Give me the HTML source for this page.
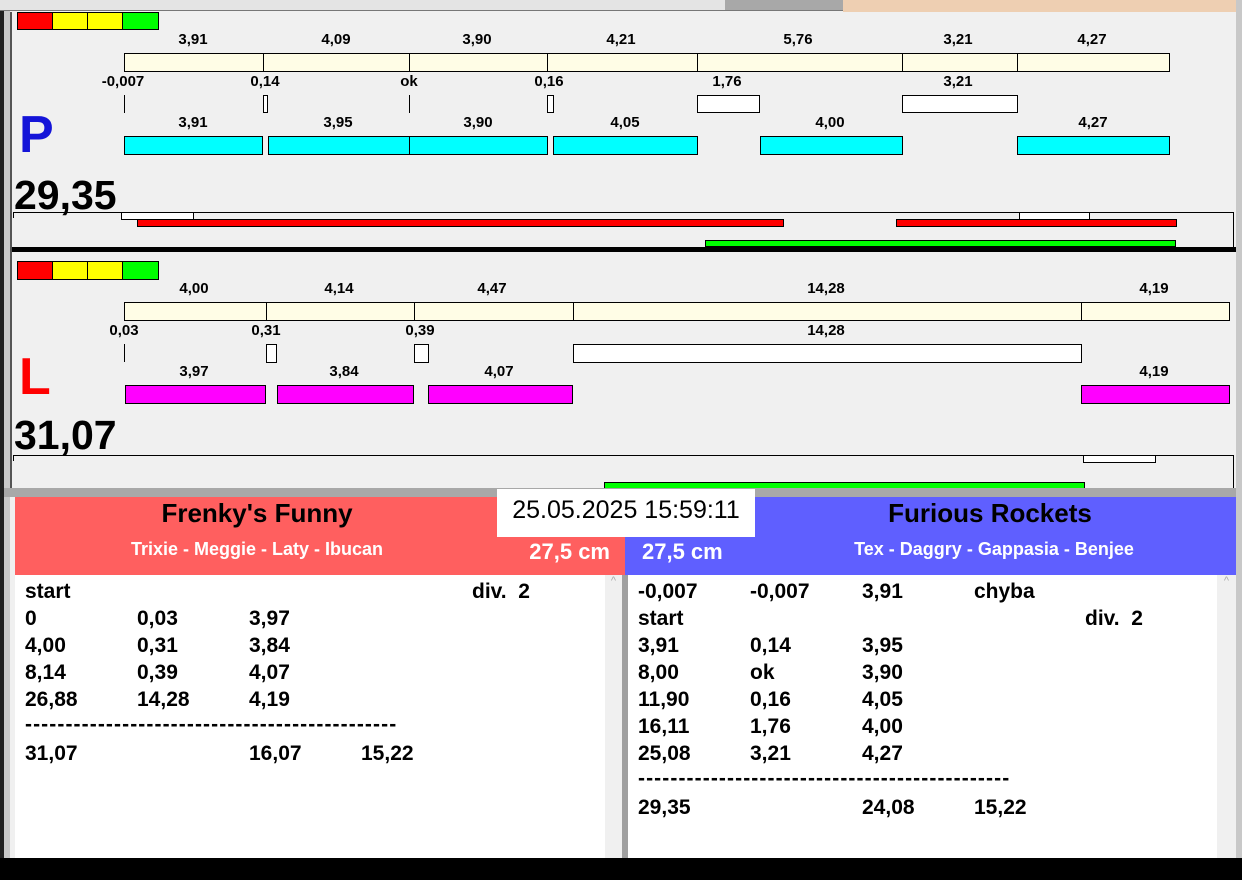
<!DOCTYPE html>
<html><head><meta charset="utf-8"><style>
*{margin:0;padding:0;box-sizing:border-box}
body{width:1242px;height:880px;position:relative;overflow:hidden;background:#f0f0f0;font-family:"Liberation Sans",Arial,sans-serif}
div{position:absolute}
.c{width:100px;text-align:center;font-weight:bold;font-size:15px;line-height:16px;color:#000}
.b{border:1px solid #000}
.y{background:#fffde6}
.w{background:#fff}
.cy{background:#00ffff}
.mg{background:#ff00ff}
.vl{width:1px;background:#000}
.t{font-weight:bold;font-size:21px;line-height:27px;color:#000;white-space:nowrap}
.d{letter-spacing:1.1px}
</style></head><body>
<!-- frame -->
<div style="left:0;top:0;width:4px;height:880px;background:#202020"></div>
<div style="left:4px;top:0;width:6px;height:880px;background:#c8c8c8"></div>
<div style="left:0;top:0;width:843px;height:11px;background:#e4e4e4;border-bottom:1px solid #777"></div>
<div style="left:725px;top:0;width:118px;height:10px;background:#a8a8a8"></div>
<div style="left:843px;top:0;width:393px;height:12px;background:#eecfb2"></div>
<div style="left:10px;top:12px;width:2px;height:476px;background:#555"></div>
<div style="left:1236px;top:0;width:6px;height:860px;background:#c8c8c8"></div>

<!-- panel 1 -->
<div style="left:17px;top:12px;width:36px;height:18px;background:#f00" class="b"></div>
<div style="left:52px;top:12px;width:36px;height:18px;background:#ff0" class="b"></div>
<div style="left:87px;top:12px;width:36px;height:18px;background:#ff0" class="b"></div>
<div style="left:122px;top:12px;width:37px;height:18px;background:#0f0" class="b"></div>

<div class="c" style="left:143px;top:32px">3,91</div>
<div class="c" style="left:286px;top:32px">4,09</div>
<div class="c" style="left:427px;top:32px">3,90</div>
<div class="c" style="left:571px;top:32px">4,21</div>
<div class="c" style="left:748px;top:32px">5,76</div>
<div class="c" style="left:908px;top:32px">3,21</div>
<div class="c" style="left:1042px;top:32px">4,27</div>

<div class="b y" style="left:124px;top:53px;width:140px;height:19px"></div>
<div class="b y" style="left:263px;top:53px;width:147px;height:19px"></div>
<div class="b y" style="left:409px;top:53px;width:139px;height:19px"></div>
<div class="b y" style="left:547px;top:53px;width:151px;height:19px"></div>
<div class="b y" style="left:697px;top:53px;width:206px;height:19px"></div>
<div class="b y" style="left:902px;top:53px;width:116px;height:19px"></div>
<div class="b y" style="left:1017px;top:53px;width:153px;height:19px"></div>

<div class="c" style="left:73px;top:74px">-0,007</div>
<div class="c" style="left:215px;top:74px">0,14</div>
<div class="c" style="left:359px;top:74px">ok</div>
<div class="c" style="left:499px;top:74px">0,16</div>
<div class="c" style="left:677px;top:74px">1,76</div>
<div class="c" style="left:908px;top:74px">3,21</div>

<div class="vl" style="left:124px;top:95px;height:18px"></div>
<div class="b w" style="left:263px;top:95px;width:5px;height:18px"></div>
<div class="vl" style="left:409px;top:95px;height:18px"></div>
<div class="b w" style="left:547px;top:95px;width:7px;height:18px"></div>
<div class="b w" style="left:697px;top:95px;width:63px;height:18px"></div>
<div class="b w" style="left:902px;top:95px;width:116px;height:18px"></div>

<div class="c" style="left:143px;top:115px">3,91</div>
<div class="c" style="left:288px;top:115px">3,95</div>
<div class="c" style="left:428px;top:115px">3,90</div>
<div class="c" style="left:575px;top:115px">4,05</div>
<div class="c" style="left:780px;top:115px">4,00</div>
<div class="c" style="left:1043px;top:115px">4,27</div>

<div class="b cy" style="left:124px;top:136px;width:139px;height:19px"></div>
<div class="b cy" style="left:268px;top:136px;width:142px;height:19px"></div>
<div class="b cy" style="left:409px;top:136px;width:139px;height:19px"></div>
<div class="b cy" style="left:553px;top:136px;width:145px;height:19px"></div>
<div class="b cy" style="left:760px;top:136px;width:143px;height:19px"></div>
<div class="b cy" style="left:1017px;top:136px;width:153px;height:19px"></div>

<div style="left:19px;top:105px;font-weight:bold;font-size:52px;line-height:60px;color:#1414d8">P</div>
<div style="left:14px;top:172px;font-weight:bold;font-size:41px;line-height:46px;color:#000">29,35</div>

<div style="left:13px;top:212px;width:1221px;height:1px;background:#000"></div>
<div style="left:1233px;top:212px;width:1px;height:35px;background:#000"></div>
<div style="left:13px;top:212px;width:1px;height:6px;background:#000"></div>
<div class="b w" style="left:121px;top:212px;width:73px;height:8px"></div>
<div class="b w" style="left:1019px;top:212px;width:71px;height:8px"></div>
<div class="b" style="left:137px;top:219px;width:647px;height:8px;background:#f00"></div>
<div class="b" style="left:896px;top:219px;width:281px;height:8px;background:#f00"></div>
<div class="b" style="left:705px;top:240px;width:471px;height:7px;background:#0f0"></div>

<div style="left:12px;top:247px;width:1224px;height:5px;background:#000"></div>

<!-- panel 2 -->
<div style="left:17px;top:261px;width:36px;height:19px;background:#f00" class="b"></div>
<div style="left:52px;top:261px;width:36px;height:19px;background:#ff0" class="b"></div>
<div style="left:87px;top:261px;width:36px;height:19px;background:#ff0" class="b"></div>
<div style="left:122px;top:261px;width:37px;height:19px;background:#0f0" class="b"></div>

<div class="c" style="left:144px;top:281px">4,00</div>
<div class="c" style="left:289px;top:281px">4,14</div>
<div class="c" style="left:442px;top:281px">4,47</div>
<div class="c" style="left:776px;top:281px">14,28</div>
<div class="c" style="left:1104px;top:281px">4,19</div>

<div class="b y" style="left:124px;top:302px;width:143px;height:19px"></div>
<div class="b y" style="left:266px;top:302px;width:149px;height:19px"></div>
<div class="b y" style="left:414px;top:302px;width:160px;height:19px"></div>
<div class="b y" style="left:573px;top:302px;width:509px;height:19px"></div>
<div class="b y" style="left:1081px;top:302px;width:149px;height:19px"></div>

<div class="c" style="left:74px;top:323px">0,03</div>
<div class="c" style="left:216px;top:323px">0,31</div>
<div class="c" style="left:370px;top:323px">0,39</div>
<div class="c" style="left:776px;top:323px">14,28</div>

<div class="vl" style="left:124px;top:344px;height:18px"></div>
<div class="b w" style="left:266px;top:344px;width:11px;height:19px"></div>
<div class="b w" style="left:414px;top:344px;width:15px;height:19px"></div>
<div class="b w" style="left:573px;top:344px;width:509px;height:19px"></div>

<div class="c" style="left:144px;top:364px">3,97</div>
<div class="c" style="left:294px;top:364px">3,84</div>
<div class="c" style="left:449px;top:364px">4,07</div>
<div class="c" style="left:1104px;top:364px">4,19</div>

<div class="b mg" style="left:125px;top:385px;width:141px;height:19px"></div>
<div class="b mg" style="left:277px;top:385px;width:137px;height:19px"></div>
<div class="b mg" style="left:428px;top:385px;width:145px;height:19px"></div>
<div class="b mg" style="left:1081px;top:385px;width:149px;height:19px"></div>

<div style="left:19px;top:349px;font-weight:bold;font-size:52px;line-height:56px;color:#f00">L</div>
<div style="left:14px;top:412px;font-weight:bold;font-size:41px;line-height:46px;color:#000">31,07</div>

<div style="left:13px;top:455px;width:1221px;height:1px;background:#000"></div>
<div style="left:1233px;top:455px;width:1px;height:33px;background:#000"></div>
<div style="left:13px;top:455px;width:1px;height:6px;background:#000"></div>
<div class="b w" style="left:1083px;top:455px;width:73px;height:8px"></div>
<div class="b" style="left:604px;top:482px;width:481px;height:7px;background:#0f0"></div>

<div style="left:4px;top:488px;width:1232px;height:9px;background:#a8a8a8"></div>

<!-- headers -->
<div style="left:15px;top:497px;width:610px;height:78px;background:#ff5f5f"></div>
<div style="left:625px;top:497px;width:611px;height:78px;background:#5f5fff"></div>
<div style="left:497px;top:489px;width:258px;height:48px;background:#fff"></div>
<div style="left:497px;top:495px;width:258px;text-align:center;font-size:25px;line-height:30px;color:#000">25.05.2025 15:59:11</div>
<div style="left:57px;top:497px;width:400px;text-align:center;font-weight:bold;font-size:26px;line-height:32px;color:#000">Frenky's Funny</div>
<div style="left:57px;top:537px;width:400px;text-align:center;font-weight:bold;font-size:18px;line-height:24px;color:#fff">Trixie - Meggie - Laty - Ibucan</div>
<div style="left:450px;top:538px;width:160px;text-align:right;font-weight:bold;font-size:22px;line-height:28px;color:#fff">27,5 cm</div>
<div style="left:790px;top:497px;width:400px;text-align:center;font-weight:bold;font-size:26px;line-height:32px;color:#000">Furious Rockets</div>
<div style="left:794px;top:537px;width:400px;text-align:center;font-weight:bold;font-size:18px;line-height:24px;color:#fff">Tex - Daggry - Gappasia - Benjee</div>
<div style="left:642px;top:538px;font-weight:bold;font-size:22px;line-height:28px;color:#fff">27,5 cm</div>

<!-- lists -->
<div style="left:15px;top:575px;width:590px;height:285px;background:#fff"></div>
<div style="left:605px;top:575px;width:17px;height:285px;background:#f0f0f0;color:#aaa;font-size:11px;text-align:center">^</div>
<div style="left:622px;top:575px;width:6px;height:285px;background:#a0a0a0"></div>
<div style="left:628px;top:575px;width:589px;height:285px;background:#fff"></div>
<div style="left:1217px;top:575px;width:19px;height:285px;background:#f0f0f0;color:#aaa;font-size:11px;text-align:center">^</div>

<div class="t" style="left:25px;top:578px">start</div><div class="t" style="left:472px;top:578px">div.&nbsp; 2</div>
<div class="t" style="left:25px;top:605px">0</div><div class="t" style="left:137px;top:605px">0,03</div><div class="t" style="left:249px;top:605px">3,97</div>
<div class="t" style="left:25px;top:632px">4,00</div><div class="t" style="left:137px;top:632px">0,31</div><div class="t" style="left:249px;top:632px">3,84</div>
<div class="t" style="left:25px;top:659px">8,14</div><div class="t" style="left:137px;top:659px">0,39</div><div class="t" style="left:249px;top:659px">4,07</div>
<div class="t" style="left:25px;top:686px">26,88</div><div class="t" style="left:137px;top:686px">14,28</div><div class="t" style="left:249px;top:686px">4,19</div>
<div class="t d" style="left:25px;top:711px">----------------------------------------------</div>
<div class="t" style="left:25px;top:740px">31,07</div><div class="t" style="left:249px;top:740px">16,07</div><div class="t" style="left:361px;top:740px">15,22</div>

<div class="t" style="left:638px;top:578px">-0,007</div><div class="t" style="left:750px;top:578px">-0,007</div><div class="t" style="left:862px;top:578px">3,91</div><div class="t" style="left:974px;top:578px">chyba</div>
<div class="t" style="left:638px;top:605px">start</div><div class="t" style="left:1085px;top:605px">div.&nbsp; 2</div>
<div class="t" style="left:638px;top:632px">3,91</div><div class="t" style="left:750px;top:632px">0,14</div><div class="t" style="left:862px;top:632px">3,95</div>
<div class="t" style="left:638px;top:659px">8,00</div><div class="t" style="left:750px;top:659px">ok</div><div class="t" style="left:862px;top:659px">3,90</div>
<div class="t" style="left:638px;top:686px">11,90</div><div class="t" style="left:750px;top:686px">0,16</div><div class="t" style="left:862px;top:686px">4,05</div>
<div class="t" style="left:638px;top:713px">16,11</div><div class="t" style="left:750px;top:713px">1,76</div><div class="t" style="left:862px;top:713px">4,00</div>
<div class="t" style="left:638px;top:740px">25,08</div><div class="t" style="left:750px;top:740px">3,21</div><div class="t" style="left:862px;top:740px">4,27</div>
<div class="t d" style="left:638px;top:765px">----------------------------------------------</div>
<div class="t" style="left:638px;top:794px">29,35</div><div class="t" style="left:862px;top:794px">24,08</div><div class="t" style="left:974px;top:794px">15,22</div>

<div style="left:0;top:858px;width:1242px;height:22px;background:#000"></div>
</body></html>
